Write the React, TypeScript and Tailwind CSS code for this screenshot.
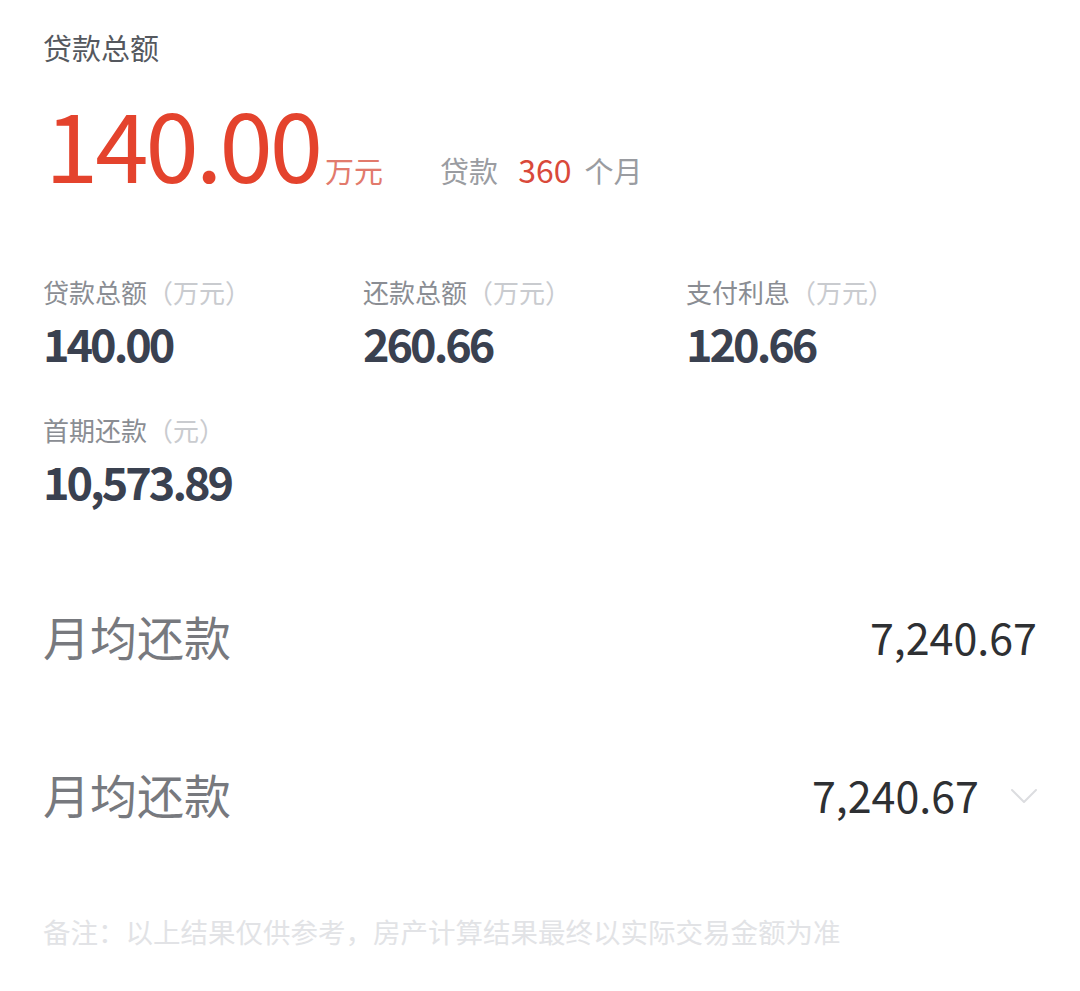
const font = { fontFamily: '"Noto Sans CJK SC", "Noto Sans", sans-serif' };

const stats = [
  { label: '贷款总额', unit: '（万元）', value: '140.00' },
  { label: '还款总额', unit: '（万元）', value: '260.66' },
  { label: '支付利息', unit: '（万元）', value: '120.66' },
  { label: '首期还款', unit: '（元）', value: '10,573.89' },
];

function Stat({ label, unit, value }: { label: string; unit: string; value: string }) {
  return (
    <div className="flex flex-col">
      <div className="text-[26px] leading-[34px] text-[#8a8d93]">
        {label}
        <span className="text-[#c9cbcf]">{unit}</span>
      </div>
      <div className="mt-[8px] text-[45px] leading-[52px] font-bold tracking-[-3px] text-[#3a4150]">{value}</div>
    </div>
  );
}

export default function App() {
  return (
    <div className="w-[1080px] h-[991px] bg-white px-[43px] pt-[27px]" style={font}>
      <div className="text-[29px] leading-[41px] text-[#55585e]">贷款总额</div>

      <div className="mt-[26px] flex items-baseline">
        <span className="ml-[2px] text-[96px] leading-none text-[#e4432d] tracking-[-3px]">140.00</span>
        <span className="text-[29px] text-[#e27a6c] ml-[5px]">万元</span>
        <span className="ml-[57px] text-[29px] text-[#9a9ca1]">贷款</span>
        <span className="ml-[20px] text-[32px] text-[#d9493a]">360</span>
        <span className="ml-[13px] text-[29px] text-[#9a9ca1]">个月</span>
      </div>

      <div className="mt-[82px] grid grid-cols-[320px_323px_1fr] gap-y-[44px]">
        {stats.map((s) => (
          <Stat key={s.label} {...s} />
        ))}
      </div>

      <div className="mt-[99px] flex items-center justify-between h-[60px]">
        <span className="text-[47px] text-[#77797e]">月均还款</span>
        <span className="text-[43px] text-[#2e3033]">7,240.67</span>
      </div>

      <div className="mt-[98px] flex items-center justify-between h-[60px]">
        <span className="text-[47px] text-[#77797e]">月均还款</span>
        <div className="flex items-center">
          <span className="text-[43px] text-[#2e3033]">7,240.67</span>
          <svg className="ml-[32px] mt-[4px]" width="26" height="15" viewBox="0 0 26 15" fill="none">
            <polyline points="1,1 13,13 25,1" stroke="#dcdde0" strokeWidth="2" strokeLinecap="round" strokeLinejoin="round" />
          </svg>
        </div>
      </div>

      <div className="mt-[87px] text-[27.5px] text-[#e2e3e6]">备注：以上结果仅供参考，房产计算结果最终以实际交易金额为准</div>
    </div>
  );
}
